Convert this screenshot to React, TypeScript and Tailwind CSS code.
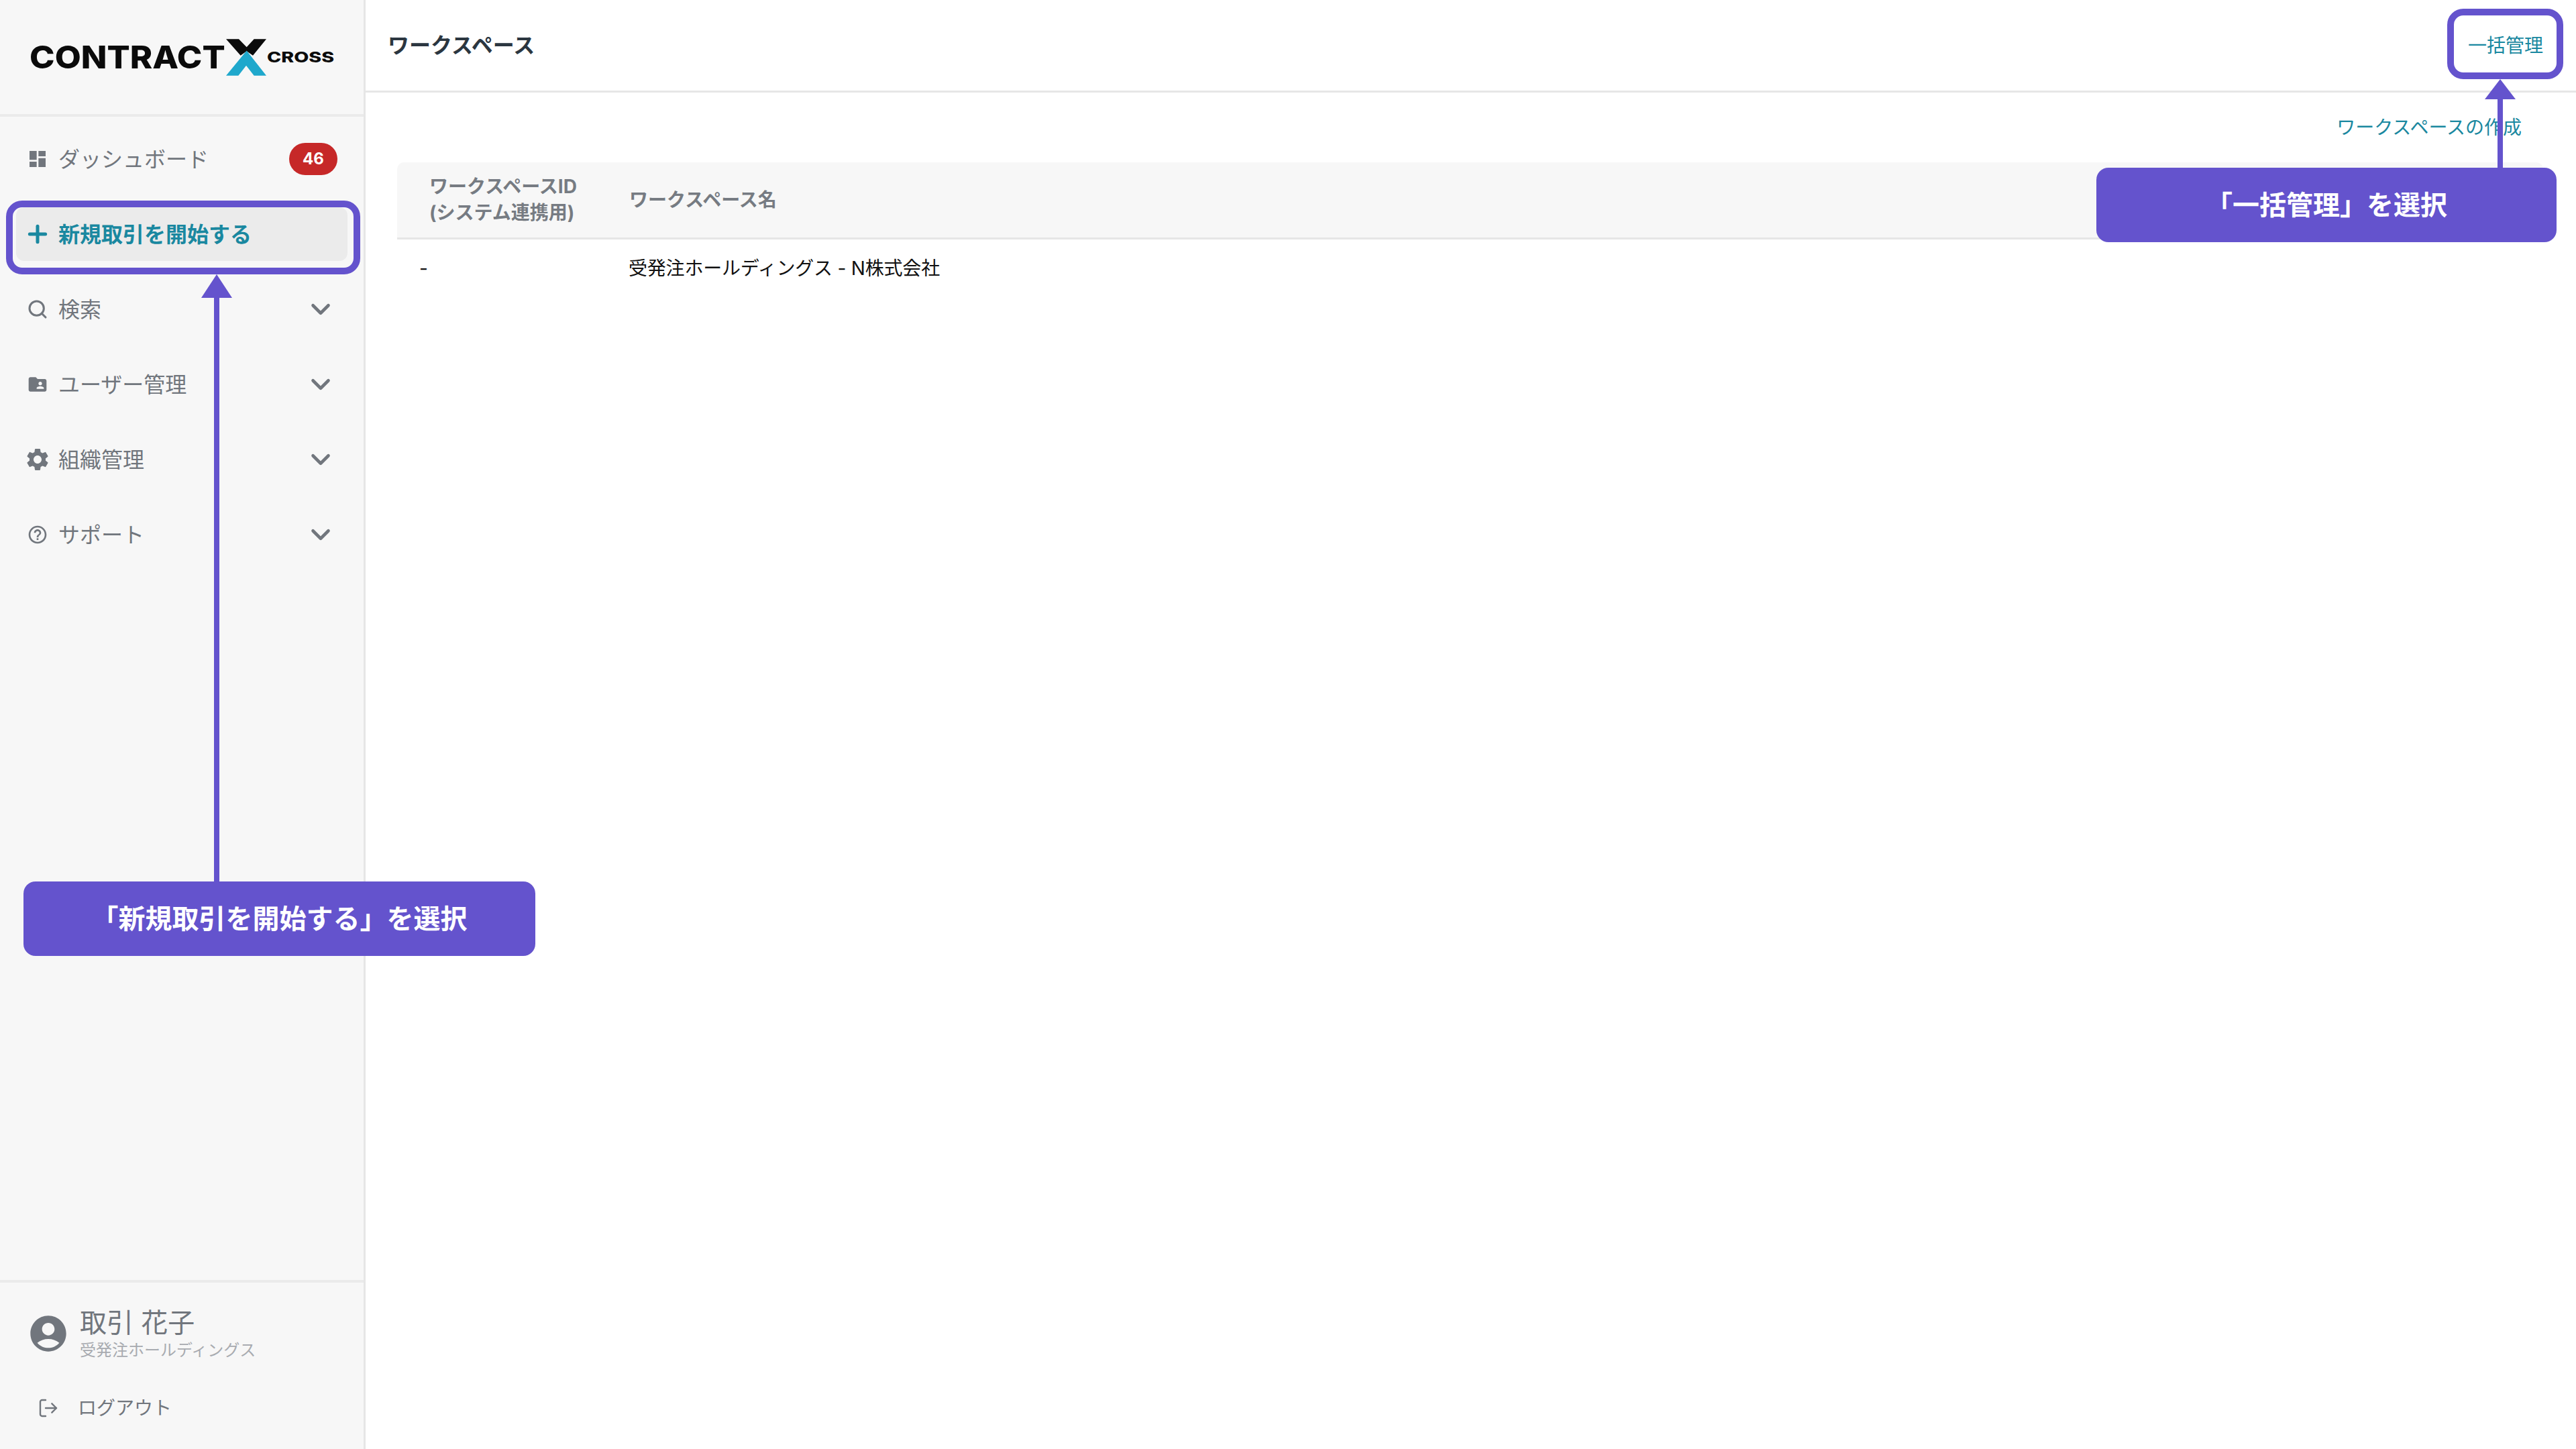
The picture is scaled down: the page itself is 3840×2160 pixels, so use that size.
import { ChevronDown, LogOut, Plus, Search } from "lucide-react";
import { MdAccountCircle, MdDashboard, MdFolderShared, MdHelpOutline, MdSettings } from "react-icons/md";

const navItems = [
  { label: "検索", icon: <Search className="w-[32px] h-[32px]" strokeWidth={2.3} /> },
  { label: "ユーザー管理", icon: <MdFolderShared className="w-[32px] h-[32px]" /> },
  { label: "組織管理", icon: <MdSettings className="w-[40px] h-[40px] shrink-0" /> },
  { label: "サポート", icon: <MdHelpOutline className="w-[32px] h-[32px]" /> },
];

function Logo() {
  return (
    <div className="h-[170px] flex items-center pl-[44px] border-b-[4px] border-[#ebebeb] box-content">
      <span className="font-['Inter'] font-extrabold text-[46px] leading-none text-[#0b0b0b] w-[293px] whitespace-nowrap scale-x-[1.1] origin-left">
        CONTRACT
      </span>
      <svg viewBox="920 38 180 164" className="w-[60px] h-[55px] shrink-0">
        <polygon points="920,38 977,38 1012,74 1045,38 1100,38 1040,112 1012,92 985,112" fill="#0b0b0b" />
        <polygon points="1012,90 1100,202 1045,202 1010,157 975,202 920,202" fill="#1fa8cc" />
      </svg>
      <span className="font-['Inter'] font-extrabold text-[22px] leading-none text-[#0b0b0b] ml-[1px] whitespace-nowrap scale-x-[1.3] origin-left">
        CROSS
      </span>
    </div>
  );
}

function Sidebar() {
  return (
    <aside className="w-[545px] h-full shrink-0 flex flex-col bg-[#f7f7f7] border-r-[3px] border-[#e6e6e6]">
      <Logo />
      <nav className="pt-[23px] px-[24px] flex flex-col gap-[32px]">
        <a className="h-[80px] pl-[16px] pr-[15px] flex items-center text-[#71767d]">
          <span className="w-[32px] flex justify-center">
            <MdDashboard className="w-[32px] h-[32px]" />
          </span>
          <span className="ml-[15px] pt-[2px] flex-1">ダッシュボード</span>
          <span className="w-[72px] h-[48px] rounded-full bg-[#c62828] text-white text-[24px] font-bold flex items-center justify-center">
            46
          </span>
        </a>
        <a className="h-[80px] pl-[16px] rounded-[12px] bg-[#ebebeb] flex items-center text-[#1a88a0] font-bold">
          <span className="w-[32px] flex justify-center">
            <Plus className="w-[40px] h-[40px] shrink-0" strokeWidth={3} />
          </span>
          <span className="ml-[15px] pt-[2px]">新規取引を開始する</span>
        </a>
        {navItems.map((item) => (
          <a key={item.label} className="h-[80px] pl-[16px] pr-[17px] flex items-center text-[#71767d]">
            <span className="w-[32px] flex justify-center">{item.icon}</span>
            <span className="ml-[15px] pt-[2px] flex-1">{item.label}</span>
            <ChevronDown className="w-[46px] h-[46px]" strokeWidth={2.4} />
          </a>
        ))}
      </nav>
      <div className="mt-auto h-[252px] border-t-[4px] border-[#ebebeb] text-[#71767d]">
        <div className="pt-[36px] pl-[40px] flex items-center gap-[15px]">
          <MdAccountCircle className="w-[64px] h-[64px] shrink-0" />
          <div>
            <p className="text-[40px] leading-[52px] -mt-[2px]">取引 花子</p>
            <p className="text-[24px] leading-[30px] text-[#a8abb0]">受発注ホールディングス</p>
          </div>
        </div>
        <div className="mt-[51px] pl-[56px] flex items-center gap-[28px]">
          <LogOut className="w-[32px] h-[32px]" strokeWidth={1.8} />
          <span className="text-[28px] leading-[40px]">ログアウト</span>
        </div>
      </div>
    </aside>
  );
}

function Main() {
  return (
    <main className="flex-1 h-full flex flex-col bg-white">
      <header className="h-[138px] pl-[33px] pr-[49px] flex items-center justify-between border-b-[3px] border-[#e6e6e6]">
        <h1 className="font-bold text-[#2b3640]">ワークスペース</h1>
        <a className="text-[28px] text-[#1a88a0]">一括管理</a>
      </header>
      <section className="pl-[47px] pr-[49px] pt-[32px] text-[28px]">
        <div className="h-[40px] mb-[32px] pr-[32px] flex items-center justify-end leading-[40px] text-[#1a88a0]">
          ワークスペースの作成
        </div>
        <div className="grid grid-cols-[346px_1fr] h-[115px] items-center bg-[#f7f7f7] border-b-[3px] border-[#e6e6e6] rounded-t-[10px] font-bold text-[#767b82]">
          <div className="pl-[48px] leading-[39px]">
            ワークスペースID
            <br />
            (システム連携用)
          </div>
          <div>ワークスペース名</div>
        </div>
        <div className="grid grid-cols-[345px_1fr] h-[86px] items-center text-[#111111]">
          <div className="pl-[33px]">-</div>
          <div className="tracking-[-0.2px]">受発注ホールディングス - N株式会社</div>
        </div>
      </section>
    </main>
  );
}

function Annotations() {
  return (
    <>
      <div className="absolute left-[9px] top-[299px] w-[528px] h-[110px] border-[10px] border-[#6453cd] rounded-[24px]" />
      <svg viewBox="0 0 46 35" className="absolute left-[300px] top-[409px] w-[46px] h-[35px]">
        <polygon points="23,0 46,35 0,35" fill="#6453cd" />
      </svg>
      <div className="absolute left-[319px] top-[444px] w-[8px] h-[870px] bg-[#6453cd]" />
      <div className="absolute left-[35px] top-[1314px] w-[763px] h-[111px] rounded-[18px] bg-[#6453cd] text-white text-[40px] font-bold flex items-center justify-center">
        「新規取引を開始する」を選択
      </div>

      <div className="absolute left-[3648px] top-[13px] w-[173px] h-[105px] border-[10px] border-[#6453cd] rounded-[24px]" />
      <svg viewBox="0 0 46 30" className="absolute left-[3704px] top-[118px] w-[46px] h-[30px]">
        <polygon points="23,0 46,30 0,30" fill="#6453cd" />
      </svg>
      <div className="absolute left-[3723px] top-[148px] w-[8px] h-[102px] bg-[#6453cd]" />
      <div className="absolute left-[3125px] top-[250px] w-[686px] h-[111px] rounded-[18px] bg-[#6453cd] text-white text-[40px] font-bold flex items-center justify-center">
        「一括管理」を選択
      </div>
    </>
  );
}

export default function App() {
  return (
    <div className="relative w-[3840px] h-[2160px] flex overflow-hidden bg-white text-[32px] font-['Inter','Noto_Sans_CJK_JP',sans-serif]">
      <Sidebar />
      <Main />
      <Annotations />
    </div>
  );
}
